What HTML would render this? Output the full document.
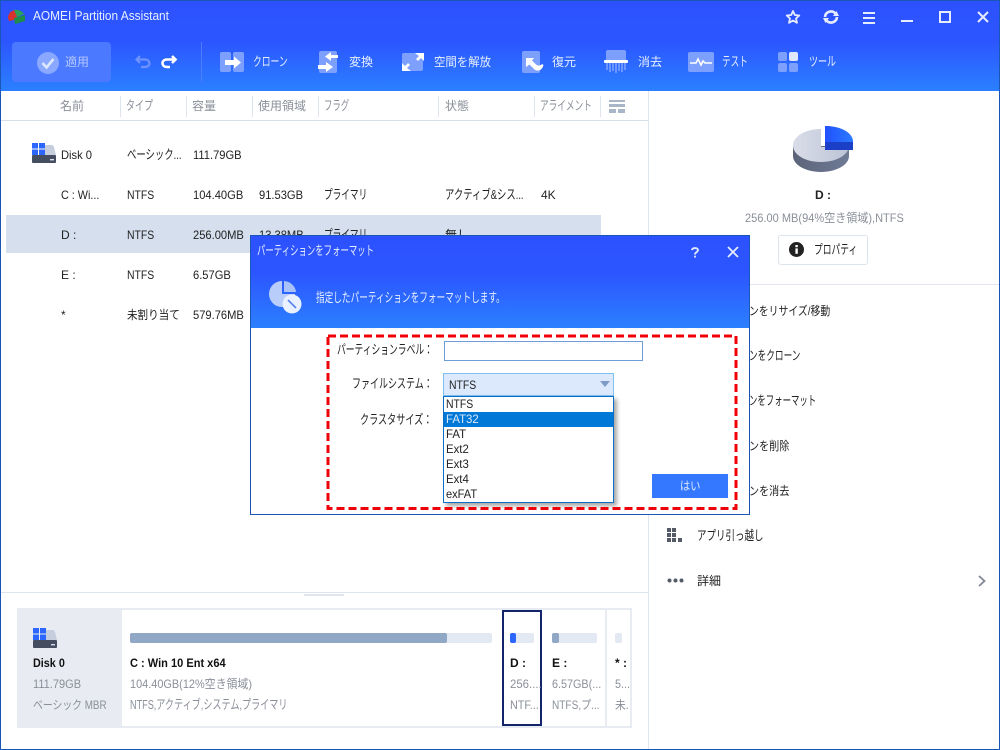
<!DOCTYPE html>
<html lang="ja"><head><meta charset="utf-8"><title>AOMEI Partition Assistant</title>
<style>
html,body{margin:0;padding:0;width:1000px;height:750px;overflow:hidden;background:#fff}
body{font-family:"Liberation Sans","Noto Sans CJK JP",sans-serif;font-size:12px;color:#222;position:relative}
.a{position:absolute}
.t{position:absolute;white-space:nowrap;line-height:16px;height:16px;transform-origin:0 50%}
.g{color:#8a8f99}
.w{color:#e6eeff}
.hd{color:#8a8f99}
.sep{position:absolute;top:96px;width:1px;height:21px;background:#dfe5ef}
.b{font-weight:bold;color:#111}
.x70{font-size:13px;transform:scaleX(.646)}.x72{font-size:13px;transform:scaleX(.665)}.x73{font-size:13px;transform:scaleX(.674)}.x75{font-size:13px;transform:scaleX(.692)}.x76{font-size:13px;transform:scaleX(.70)}.x78{font-size:13px;transform:scaleX(.72)}.x79{font-size:13px;transform:scaleX(.73)}.x82{transform:scaleX(.82)}.x84{transform:scaleX(.84)}.x85{transform:scaleX(.85)}.x87{transform:scaleX(.87)}.x88{transform:scaleX(.88)}.x90{transform:scaleX(.90)}.x91{transform:scaleX(.91)}.x92{transform:scaleX(.92)}.x93{transform:scaleX(.93)}.x95{transform:scaleX(.95)}
svg{position:absolute;overflow:visible}
</style></head><body>
<div class="a" style="left:0;top:0;width:1000px;height:91px;background:linear-gradient(#2c52ff 0,#2c55ff 45%,#2b80ff 100%)"></div>

<svg style="left:8px;top:9px" width="18" height="16" viewBox="0 0 18 16"><path d="M0 9 C0 4 4 1 8 1 L8 4 L10 7 L6 11 L1 12Z" fill="#d8322f"/><path d="M6 1 C10 0 14 2 16 5 L9 8Z" fill="#2aa05a"/><path d="M6 9 L17 6 L17 12 L7 15Z" fill="#1e8d4a"/></svg>
<span class="t w x95" style="left:33px;top:8px;font-size:12.5px">AOMEI Partition Assistant</span>

<!-- window controls -->
<svg style="left:785px;top:9px" width="16" height="16" viewBox="0 0 16 16"><path d="M8 2 L9.8 6 L14.3 6.5 L11 9.4 L12 13.8 L8 11.5 L4 13.8 L5 9.4 L1.7 6.5 L6.2 6Z" fill="none" stroke="#e6ecff" stroke-width="1.8" stroke-linejoin="round"/></svg>
<svg style="left:823px;top:9px" width="16" height="16" viewBox="0 0 16 16"><path d="M2 8 A6 6 0 0 1 12.5 4.5 M14 8 A6 6 0 0 1 3.5 11.5" fill="none" stroke="#e6ecff" stroke-width="2.6"/><path d="M10 7 L16 7 L13.5 2Z M6 9 L0 9 L2.5 14Z" fill="#e6ecff"/></svg>
<div class="a" style="left:863px;top:12px;width:12px;height:2px;background:#e6ecff;box-shadow:0 5px 0 #e6ecff,0 10px 0 #e6ecff"></div>
<div class="a" style="left:901px;top:20px;width:12px;height:2px;background:#e6ecff"></div>
<div class="a" style="left:939px;top:11px;width:8px;height:8px;border:2px solid #e6ecff"></div>
<svg style="left:978px;top:12px" width="10" height="10" viewBox="0 0 10 10"><path d="M0 0 L10 10 M10 0 L0 10" stroke="#e6ecff" stroke-width="2"/></svg>

<!-- toolbar -->
<div class="a" style="left:12px;top:42px;width:99px;height:40px;border-radius:4px;background:#4b79ff"></div>
<svg style="left:37px;top:52px" width="22" height="22" viewBox="0 0 22 22"><circle cx="11" cy="11" r="11" fill="#8aa8ff"/><path d="M5.5 11 L9.5 15.5 L16.5 7" fill="none" stroke="#dce6ff" stroke-width="2.6"/></svg>
<span class="t" style="left:65px;top:54px;color:#b4c8ff">適用</span>
<svg style="left:135px;top:55px" width="16" height="14" viewBox="0 0 16 14"><path d="M5 1 L1.5 4.5 L5 8 M2 4.5 L10 4.5 C16 4.5 16 12 10 12 L6 12" fill="none" stroke="#6f92ff" stroke-width="2.2"/></svg>
<svg style="left:161px;top:55px" width="16" height="14" viewBox="0 0 16 14"><path d="M11 1 L14.5 4.5 L11 8 M14 4.5 L6 4.5 C0 4.5 0 12 6 12 L9 12" fill="none" stroke="#fff" stroke-width="2.6"/></svg>
<div class="a" style="left:201px;top:42px;width:1px;height:40px;background:#4f7dff"></div>

<!-- clone -->
<div class="a" style="left:220px;top:52px;width:11px;height:20px;background:#7da0ff;border-radius:2px"></div>
<div class="a" style="left:233px;top:52px;width:11px;height:20px;background:#7da0ff;border-radius:2px"></div>
<svg style="left:225px;top:56px" width="16" height="13" viewBox="0 0 16 13"><path d="M0 4 H9 V0.5 L16 6.5 L9 12.5 V9 H0Z" fill="#fff"/></svg>
<span class="t w x73" style="left:253px;top:54px">クローン</span>
<!-- convert -->
<div class="a" style="left:319px;top:51px;width:18px;height:22px;background:#7da0ff;border-radius:2px"></div>
<svg style="left:318px;top:50px" width="20" height="22" viewBox="0 0 20 22"><path d="M20 5 H13 V2 L7 6.500 L13 11 V8 H20Z M0 15 H8 V12 L15 17 L8 22 V19 H0Z" fill="#fff"/></svg>
<span class="t w" style="left:349px;top:54px">変換</span>
<!-- free -->
<div class="a" style="left:402px;top:53px;width:21px;height:18px;background:#7da0ff;border-radius:2px"></div>
<svg style="left:402px;top:53px" width="22" height="18" viewBox="0 0 22 18"><path d="M13 0 H22 V8 L19 5 L16 8 L14 6 L17 3Z M9 18 H0 V10 L3 13 L6 10 L8 12 L5 15Z" fill="#fff"/></svg>
<span class="t w x95" style="left:434px;top:54px">空間を解放</span>
<!-- restore -->
<div class="a" style="left:522px;top:51px;width:18px;height:22px;background:#7da0ff;border-radius:2px"></div>
<svg style="left:525px;top:57px" width="19" height="15" viewBox="0 0 19 15"><path d="M1 1 H9 L7 3.500 L11 7.500 C13 9 15 9 17 7 L18.500 8 C17 14 12 15 9 12 L4.500 7.500 L1 10Z" fill="#fff"/></svg>
<span class="t w" style="left:552px;top:54px">復元</span>
<!-- wipe -->
<div class="a" style="left:606px;top:50px;width:20px;height:11px;background:#7da0ff;border-radius:2px 2px 0 0"></div>
<div class="a" style="left:604px;top:60px;width:24px;height:3px;background:#fff;border-radius:1px"></div>
<svg style="left:606px;top:63px" width="20" height="10" viewBox="0 0 20 10"><path d="M1 0V7M4 0V9M7 0V8M10 0V10M13 0V8M16 0V9M19 0V7" stroke="#7da0ff" stroke-width="1.6"/></svg>
<span class="t w" style="left:638px;top:54px">消去</span>
<!-- test -->
<div class="a" style="left:688px;top:52px;width:26px;height:20px;background:#7da0ff;border-radius:2px"></div>
<svg style="left:688px;top:52px" width="26" height="20" viewBox="0 0 26 20"><path d="M2 11 H8 L10 7 L13 13 L15 9 L17 11 H24" fill="none" stroke="#fff" stroke-width="1.6"/></svg>
<span class="t w x72" style="left:722px;top:54px">テスト</span>
<!-- tools -->
<div class="a" style="left:778px;top:52px;width:9px;height:9px;background:#7da0ff;border-radius:2px"></div>
<div class="a" style="left:789px;top:52px;width:9px;height:9px;background:#dfe7ff;border-radius:2px"></div>
<div class="a" style="left:778px;top:63px;width:9px;height:9px;background:#7da0ff;border-radius:2px"></div>
<div class="a" style="left:789px;top:63px;width:9px;height:9px;background:#7da0ff;border-radius:2px"></div>
<span class="t w x75" style="left:809px;top:54px">ツール</span>

<!-- table header -->
<span class="t hd" style="left:60px;top:98px">名前</span>
<span class="t hd x75" style="left:126px;top:98px">タイプ</span>
<span class="t hd" style="left:192px;top:98px">容量</span>
<span class="t hd" style="left:258px;top:98px">使用領域</span>
<span class="t hd x70" style="left:324px;top:98px">フラグ</span>
<span class="t hd" style="left:445px;top:98px">状態</span>
<span class="t hd x72" style="left:540px;top:98px">アライメント</span>
<div class="sep" style="left:120px"></div><div class="sep" style="left:186px"></div><div class="sep" style="left:252px"></div><div class="sep" style="left:318px"></div><div class="sep" style="left:438px"></div><div class="sep" style="left:534px"></div><div class="sep" style="left:600px"></div>
<div class="a" style="left:609px;top:100px;width:16px;height:2px;background:#a9b6c8"></div>
<div class="a" style="left:609px;top:104px;width:16px;height:3px;background:#a9b6c8"></div>
<div class="a" style="left:609px;top:109px;width:7px;height:4px;background:#a9b6c8"></div>
<div class="a" style="left:618px;top:109px;width:7px;height:4px;background:#a9b6c8"></div>
<div class="a" style="left:1px;top:120px;width:647px;height:1px;background:#d8dfeb"></div>
<div class="a" style="left:648px;top:91px;width:1px;height:658px;background:#dfe5ef"></div>

<!-- rows -->
<div class="a" style="left:6px;top:215px;width:595px;height:38px;background:#d5dfee"></div>
<svg style="left:32px;top:143px" width="24" height="20" viewBox="0 0 24 20"><path d="M13 2 H20 Q21 2 22 4 L24 12 H13Z" fill="#c6cddd"/><path d="M1 12 H23 Q24 12 24 13 V19 Q24 20 23 20 H1 Q0 20 0 19 V13 Q0 12 1 12Z" fill="#454e60"/><rect x="18" y="16" width="4" height="1.400" fill="#d8deea"/><path d="M0 0H6V5.500H0ZM7 0H13V5.500H7ZM0 6.500H6V12H0ZM7 6.500H13V12H7Z" fill="#2c66ff"/></svg>
<span class="t x93" style="left:61px;top:147px">Disk 0</span><span class="t x78" style="left:127px;top:147px">ベーシック...</span><span class="t x93" style="left:193px;top:147px">111.79GB</span>
<span class="t x90" style="left:61px;top:187px">C : Wi...</span><span class="t x87" style="left:127px;top:187px">NTFS</span><span class="t x93" style="left:193px;top:187px">104.40GB</span><span class="t x93" style="left:259px;top:187px">91.53GB</span><span class="t x72" style="left:324px;top:187px">プライマリ</span><span class="t x78" style="left:445px;top:187px">アクティブ&amp;シス...</span><span class="t" style="left:541px;top:187px">4K</span>
<span class="t" style="left:61px;top:227px">D :</span><span class="t x87" style="left:127px;top:227px">NTFS</span><span class="t x93" style="left:193px;top:227px">256.00MB</span><span class="t x93" style="left:259px;top:227px">13.38MB</span><span class="t x72" style="left:324px;top:227px">プライマリ</span><span class="t" style="left:445px;top:227px">無し</span>
<span class="t" style="left:61px;top:267px">E :</span><span class="t x87" style="left:127px;top:267px">NTFS</span><span class="t x93" style="left:193px;top:267px">6.57GB</span>
<span class="t" style="left:61px;top:307px">*</span><span class="t x88" style="left:127px;top:307px">未割り当て</span><span class="t x93" style="left:193px;top:307px">579.76MB</span>

<!-- right panel -->
<svg style="left:792px;top:126px" width="62" height="48" viewBox="0 0 62 48">
<defs><linearGradient id="p1" x1="0" x2="1"><stop offset="0" stop-color="#d9dde8"/><stop offset="1" stop-color="#bcc4d6"/></linearGradient><linearGradient id="p2" x1="0" x2="1"><stop offset="0" stop-color="#5b6479"/><stop offset="1" stop-color="#6f7a95"/></linearGradient><linearGradient id="p3" x1="0" x2="1"><stop offset="0" stop-color="#2250ff"/><stop offset="1" stop-color="#2b7bff"/></linearGradient></defs>
<path d="M1 20 V30 C1 39 14 46 29 46 C44 46 57 39 57 30 V20Z" fill="url(#p2)"/>
<path d="M29 3 C13 3 1 10.500 1 19.500 C1 28.500 13 36 29 36 C45 36 57 28.500 57 19.500 L33 21 L29 21Z" fill="url(#p1)"/>
<path d="M33 0 C47 0 61 6 61 16 V24 H33Z" fill="#1c3fc8"/>
<path d="M33 0 C47 0 61 6 61 16 L33 16Z" fill="url(#p3)"/>
</svg>
<span class="t" style="left:815px;top:187px;font-weight:bold">D :</span>
<span class="t g x92" style="left:745px;top:210px">256.00 MB(94%空き領域),NTFS</span>
<div class="a" style="left:778px;top:235px;width:90px;height:30px;box-sizing:border-box;border:1px solid #dde3ec;border-radius:3px;background:#fff"></div>
<svg style="left:789px;top:242px" width="15" height="15" viewBox="0 0 15 15"><circle cx="7.5" cy="7.5" r="7.5" fill="#222"/><rect x="6.4" y="6.4" width="2.4" height="5.4" fill="#fff"/><rect x="6.4" y="3" width="2.4" height="2.2" fill="#fff"/></svg>
<span class="t x73" style="left:814px;top:242px">プロパティ</span>
<div class="a" style="left:649px;top:284px;width:350px;height:1px;background:#e2e7ef"></div>
<span class="t x82" style="left:749px;top:303px">ンをリサイズ/移動</span>
<span class="t x72" style="left:749px;top:348px">ンをクローン</span>
<span class="t x70" style="left:749px;top:393px">ンをフォーマット</span>
<span class="t x84" style="left:749px;top:438px">ンを削除</span>
<span class="t x84" style="left:749px;top:483px">ンを消去</span>
<svg style="left:667px;top:528px" width="17" height="15" viewBox="0 0 17 15"><path d="M0 0h4v4H0zM5 0h4v4H5zM0 5h4v4H0zM5 5h4v4H5zM0 10h4v4H0zM5 10h4v4H5zM11 10h4v4h-4z" fill="#555b66"/></svg>
<span class="t x79" style="left:697px;top:528px">アプリ引っ越し</span>
<svg style="left:667px;top:578px" width="17" height="5" viewBox="0 0 17 5"><circle cx="2.500" cy="2.500" r="2" fill="#555b66"/><circle cx="8.500" cy="2.500" r="2" fill="#555b66"/><circle cx="14.500" cy="2.500" r="2" fill="#555b66"/></svg>
<span class="t" style="left:697px;top:573px">詳細</span>
<svg style="left:978px;top:575px" width="8" height="12" viewBox="0 0 8 12"><path d="M1 1 L6.500 6 L1 11" fill="none" stroke="#7f8694" stroke-width="1.800"/></svg>

<!-- bottom panel -->
<div class="a" style="left:1px;top:592px;width:647px;height:1px;background:#dfe5ef"></div>
<div class="a" style="left:304px;top:594px;width:40px;height:2px;background:#dfe5ef"></div>
<div class="a" style="left:17px;top:608px;width:615px;height:120px;background:#e8ebf2"></div>
<div class="a" style="left:122px;top:610px;width:380px;height:116px;background:#fff"></div>
<div class="a" style="left:502px;top:610px;width:40px;height:116px;box-sizing:border-box;border:2px solid #14246b;background:#fff"></div>
<div class="a" style="left:542px;top:610px;width:63px;height:116px;background:#fff"></div>
<div class="a" style="left:607px;top:610px;width:23px;height:116px;background:#fff"></div>
<svg style="left:33px;top:628px" width="24" height="20" viewBox="0 0 24 20"><path d="M13 2 H20 Q21 2 22 4 L24 12 H13Z" fill="#c6cddd"/><path d="M1 12 H23 Q24 12 24 13 V19 Q24 20 23 20 H1 Q0 20 0 19 V13 Q0 12 1 12Z" fill="#454e60"/><rect x="18" y="16" width="4" height="1.400" fill="#d8deea"/><path d="M0 0H6V5.500H0ZM7 0H13V5.500H7ZM0 6.500H6V12H0ZM7 6.500H13V12H7Z" fill="#2c66ff"/></svg>
<span class="t b x90" style="left:33px;top:655px">Disk 0</span>
<span class="t g x92" style="left:33px;top:676px">111.79GB</span>
<span class="t g x82" style="left:33px;top:697px">ベーシック MBR</span>

<div class="a" style="left:130px;top:633px;width:362px;height:10px;background:#e3e9f3;border-radius:2px"></div>
<div class="a" style="left:130px;top:633px;width:317px;height:10px;background:#91a7c6;border-radius:2px"></div>
<span class="t b x92" style="left:130px;top:655px">C : Win 10 Ent x64</span>
<span class="t g x91" style="left:130px;top:676px">104.40GB(12%空き領域)</span>
<span class="t g x76" style="left:130px;top:697px">NTFS,アクティブ,システム,プライマリ</span>

<div class="a" style="left:510px;top:633px;width:24px;height:10px;background:#e3e9f3;border-radius:2px"></div>
<div class="a" style="left:510px;top:633px;width:6px;height:10px;background:#2c66ff;border-radius:2px"></div>
<span class="t b" style="left:510px;top:655px">D :</span>
<span class="t g x95" style="left:510px;top:676px">256....</span>
<span class="t g x90" style="left:510px;top:697px">NTF...</span>

<div class="a" style="left:552px;top:633px;width:45px;height:10px;background:#e3e9f3;border-radius:2px"></div>
<div class="a" style="left:552px;top:633px;width:7px;height:10px;background:#91a7c6;border-radius:2px"></div>
<span class="t b" style="left:552px;top:655px">E :</span>
<span class="t g x90" style="left:552px;top:676px">6.57GB(...</span>
<span class="t g x84" style="left:552px;top:697px">NTFS,プ...</span>

<div class="a" style="left:615px;top:633px;width:7px;height:10px;background:#e3e9f3;border-radius:2px"></div>
<span class="t b" style="left:615px;top:655px">* :</span>
<span class="t g x90" style="left:615px;top:676px">5...</span>
<span class="t g x90" style="left:615px;top:697px">未.</span>

<!-- dialog -->
<div class="a" style="left:250px;top:235px;width:500px;height:280px;box-sizing:border-box;border:1px solid #1a56b5;background:#fff"></div>
<div class="a" style="left:251px;top:236px;width:498px;height:92px;background:linear-gradient(#2c52ff 0,#2c55ff 40%,#2b80ff 100%)"></div>
<span class="t w x70" style="left:257px;top:243px">パーティションをフォーマット</span>
<svg style="left:691px;top:247px" width="8" height="11" viewBox="0 0 10 14"><path d="M1.200 4 C1.200 0.500 8.800 0.500 8.800 4 C8.800 6.500 5 6.500 5 9.500" fill="none" stroke="#dfe7ff" stroke-width="2.400"/><rect x="3.800" y="11" width="2.400" height="2.400" fill="#dfe7ff"/></svg>
<svg style="left:728px;top:247px" width="10" height="10" viewBox="0 0 10 10"><path d="M0 0 L10 10 M10 0 L0 10" stroke="#e6ecff" stroke-width="1.800"/></svg>
<svg style="left:270px;top:281px" width="32" height="33" viewBox="0 0 32 33"><path d="M12 0 V13 H25 A13 13 0 1 1 12 0Z" fill="#b9cdfb"/><path d="M14 0 A13 12 0 0 1 26 11 L14 11Z" fill="#a9c2fa"/><circle cx="22" cy="23" r="9.500" fill="#e9f0ff"/><path d="M18 19 L26 27" stroke="#5f86ef" stroke-width="1.800"/></svg>
<span class="t w x72" style="left:316px;top:290px">指定したパーティションをフォーマットします。</span>

<span class="t x73" style="left:337px;top:342px">パーティションラベル：</span>
<div class="a" style="left:444px;top:341px;width:199px;height:20px;box-sizing:border-box;border:1px solid #6f9bd8;background:#fff"></div>
<span class="t x75" style="left:352px;top:376px">ファイルシステム：</span>
<div class="a" style="left:443px;top:373px;width:171px;height:23px;box-sizing:border-box;border:1px solid #7fc0f0;background:#dce9fc"></div>
<span class="t x87" style="left:449px;top:377px">NTFS</span>
<svg style="left:600px;top:381px" width="10" height="6" viewBox="0 0 10 6"><path d="M0 0 H10 L5 6Z" fill="#7f9ac6"/></svg>
<span class="t x76" style="left:360px;top:412px">クラスタサイズ：</span>

<div class="a" style="left:443px;top:396px;width:171px;height:107px;box-sizing:border-box;border:1px solid #0a6fc9;background:#fff;box-shadow:3px 3px 4px rgba(0,0,0,.35)"></div>
<div class="a" style="left:444px;top:412px;width:169px;height:15px;background:#0078d7"></div>
<span class="t x87" style="left:446px;top:396px">NTFS</span>
<span class="t x95" style="left:446px;top:411px;color:#dbe9f8">FAT32</span>
<span class="t x95" style="left:446px;top:426px">FAT</span>
<span class="t x95" style="left:446px;top:441px">Ext2</span>
<span class="t x95" style="left:446px;top:456px">Ext3</span>
<span class="t x95" style="left:446px;top:471px">Ext4</span>
<span class="t x92" style="left:446px;top:486px">exFAT</span>

<div class="a" style="left:652px;top:474px;width:76px;height:24px;background:#3378ff"></div>
<span class="t x85" style="left:680px;top:478px;color:#dfe9ff">はい</span>

<!-- red dashed -->
<svg style="left:326px;top:334px" width="412" height="176" viewBox="0 0 412 176"><rect x="2" y="2" width="408" height="172.500" fill="none" stroke="#f00009" stroke-width="3" stroke-dasharray="8 4"/></svg>

<!-- window border -->
<div class="a" style="left:0;top:0;width:1000px;height:750px;box-sizing:border-box;border:1px solid #1a56b5;pointer-events:none"></div>
</body></html>
